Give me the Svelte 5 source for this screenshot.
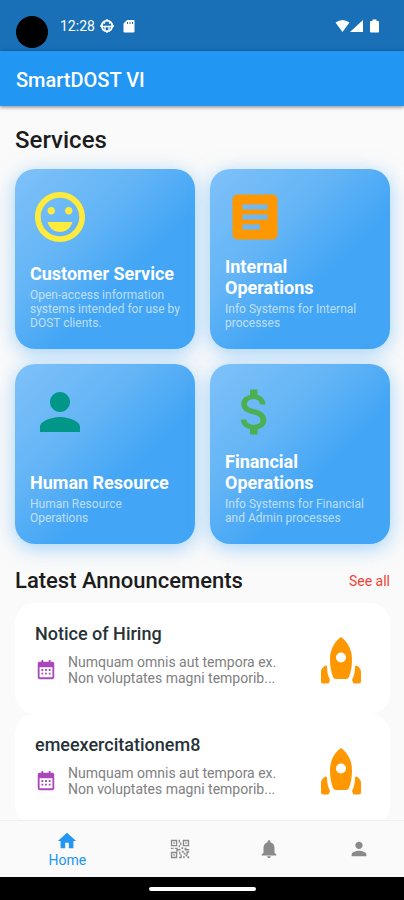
<script>
  let active = "Home";

  const services = [
    {
      icon: "smile",
      color: "#ffeb3b",
      title: "Customer Service",
      text: "Open-access information systems intended for use by DOST clients."
    },
    {
      icon: "article",
      color: "#ff9800",
      title: "Internal Operations",
      text: "Info Systems for Internal processes"
    },
    {
      icon: "person",
      color: "#009688",
      title: "Human Resource",
      text: "Human Resource Operations"
    },
    {
      icon: "dollar",
      color: "#4caf50",
      title: "Financial Operations",
      text: "Info Systems for Financial and Admin processes"
    }
  ];

  const announcements = [
    { title: "Notice of Hiring", lines: ["Numquam omnis aut tempora ex.", "Non voluptates magni temporib..."] },
    { title: "emeexercitationem8", lines: ["Numquam omnis aut tempora ex.", "Non voluptates magni temporib..."] }
  ];

  const tabs = [
    { name: "Home", icon: "home" },
    { name: "Scan", icon: "qr" },
    { name: "Notifications", icon: "bell" },
    { name: "Profile", icon: "person" }
  ];

  // 24x24 glyphs
  const paths = {
    smile:
      "M11.99 2C6.47 2 2 6.48 2 12s4.47 10 9.99 10C17.52 22 22 17.52 22 12S17.52 2 11.99 2zM12 19.700c-4.250 0-7.700-3.450-7.700-7.700s3.450-7.700 7.700-7.700 7.700 3.450 7.700 7.700-3.450 7.700-7.700 7.700zm3.500-8.700c.83 0 1.500-.67 1.500-1.500S16.330 8 15.500 8 14 8.670 14 9.500s.67 1.500 1.500 1.500zm-7 0c.83 0 1.500-.67 1.500-1.500S9.330 8 8.500 8 7 8.670 7 9.500 7.670 11 8.500 11zM7 14c.7 2.340 2.600 4 5 4s4.300-1.660 5-4z",
    article:
      "M19 3H5c-1.100 0-2 .9-2 2v14c0 1.100.9 2 2 2h14c1.100 0 2-.9 2-2V5c0-1.100-.9-2-2-2zm-5 14H7v-2h7v2zm3-4H7v-2h10v2zm0-4H7V7h10v2z",
    person:
      "M12 12c2.210 0 4-1.790 4-4s-1.790-4-4-4-4 1.790-4 4 1.790 4 4 4zm0 2c-2.670 0-8 1.340-8 4v2h16v-2c0-2.660-5.330-4-8-4z",
    dollar:
      "M11.800 10.900c-2.270-.59-3-1.200-3-2.150 0-1.090 1.010-1.850 2.700-1.850 1.780 0 2.440.85 2.500 2.100h2.210c-.07-1.720-1.120-3.300-3.210-3.810V3h-3v2.160c-1.940.42-3.500 1.680-3.500 3.610 0 2.310 1.910 3.460 4.700 4.130 2.500.6 3 1.480 3 2.410 0 .69-.49 1.790-2.700 1.790-2.060 0-2.870-.92-2.980-2.100h-2.200c.12 2.190 1.760 3.420 3.680 3.830V21h3v-2.150c1.950-.37 3.500-1.500 3.500-3.550 0-2.840-2.430-3.810-4.700-4.400z",
    home: "M10 20v-6h4v6h5v-8h3L12 3 2 12h3v8z",
    bell:
      "M12 22c1.100 0 2-.9 2-2h-4c0 1.100.89 2 2 2zm6-6v-5c0-3.070-1.640-5.640-4.500-6.320V4c0-.83-.67-1.500-1.500-1.500s-1.500.67-1.500 1.500v.68C7.630 5.360 6 7.920 6 11v5l-2 2v1h16v-1l-2-2z",
    qr:
      "M2 2h7v7H2zM3.500 3.500v4h4v-4zM4.700 4.700h1.600v1.600H4.700zM15 2h7v7h-7zM16.500 3.500v4h4v-4zM17.700 4.700h1.600v1.600h-1.600zM2 15h7v7H2zM3.500 16.500v4h4v-4zM4.700 17.700h1.600v1.600H4.700zM10.500 2H12v3h-1.500zM12 5h1.500v3H12zM10.500 8H12v2h-1.500zM2 10.500h3V12H2zM6.500 10.500h3V12h3v1.500h-3V15H8v-3H6.500zM13.500 10h2v2h-2zM17 10.500h2V12h3v1.500h-5zM11 15h1.500v3H11zM12.500 18H14v4h-3v-1.500h1.500zM14 14h2v2h-2zM16 16h2v2h-2zM18 18h2v2h-2zM20 20h2v2h-2zM19 14.500h3V16h-1.500v2H19zM15.500 19.500H17V22h-1.500z",
    calendar:
      "M7 1v2H5C3.900 3 3 3.900 3 5v15c0 1.100.9 2 2 2h14c1.100 0 2-.9 2-2V5c0-1.100-.9-2-2-2h-2V1h-2v2H9V1zM5 9h14v11H5zM7 11v2h2v-2zM11 11v2h2v-2zM15 11v2h2v-2zM7 15v2h2v-2zM11 15v2h2v-2zM15 15v2h2v-2z"
  };
</script>

{#snippet glyph(name)}
  <svg viewBox="0 0 24 24" aria-hidden="true">
    <path fill="currentColor" fill-rule={name === "qr" ? "evenodd" : "nonzero"} d={paths[name]} />
  </svg>
{/snippet}

<div class="app">
  <div class="status">
    <span class="camera"></span>
    <span class="time">12:28</span>
    <svg class="globe" viewBox="0 0 14 14" aria-hidden="true">
      <circle cx="7" cy="7" r="5.300" fill="none" stroke="#fff" stroke-width="1.800" />
      <path d="M2 7.500h10M5 4.500L3.500 3M9 4.500L10.500 3M5 7.500V11M9 7.500V11M7 0v2.500M7 11.500V14M0 7h2M12 7h2" fill="none" stroke="#fff" stroke-width="1.300" />
    </svg>
    <svg class="sd" viewBox="0 0 12 14" aria-hidden="true">
      <path fill="#fff" fill-rule="evenodd" d="M4 1h6.500Q11.500 1 11.500 2v10.500q0 1-1 1h-9q-1 0-1-1V4.500zM4 3v2h1V3zM6.500 3v2h1V3zM9 3v2h1V3z" />
    </svg>
    <span class="signals">
      <svg width="15" height="14" viewBox="0 0 15 14" aria-hidden="true">
        <path fill="#fff" d="M.5 3.500Q7.500-1.500 14.500 3.500L7.500 13z" />
      </svg>
      <svg width="13" height="14" viewBox="0 0 13 14" aria-hidden="true">
        <path fill="#fff" d="M13 1v12H0z" />
      </svg>
      <svg class="battery" width="9" height="14" viewBox="0 0 9 14" aria-hidden="true">
        <path fill="#fff" d="M2.500.5h4V2H8q1 0 1 1v9.500q0 1-1 1H1q-1 0-1-1V3q0-1 1-1h1.500z" />
      </svg>
    </span>
  </div>

  <header>
    <h1>SmartDOST VI</h1>
  </header>

  <main>
    <h2 class="services-head">Services</h2>
    <div class="services">
      {#each services as service}
        <a class="service" href="#{service.icon}">
          <span class="service-icon" style="color: {service.color}">{@render glyph(service.icon)}</span>
          <span class="service-title">{service.title}</span>
          <span class="service-text">{service.text}</span>
        </a>
      {/each}
    </div>

    <div class="section-head">
      <h2>Latest Announcements</h2>
      <a href="#all">See all</a>
    </div>

    {#each announcements as item}
      <article>
        <div class="info">
          <h3>{item.title}</h3>
          <div class="summary">
            <span class="calendar">{@render glyph("calendar")}</span>
            <p>
              {#each item.lines as line}
                <span>{line}</span>
              {/each}
            </p>
          </div>
        </div>
        <svg class="rocket" viewBox="0 0 42 48" aria-hidden="true">
          <path fill="#ff9800" fill-rule="evenodd" d="M21 0C28 5 32 13 32 22c0 7-1 13-3 18q-.8 2-3 2H16q-2.200 0-3-2C11 35 10 29 10 22 10 13 14 5 21 0zM21 15.500a5 5 0 1 0 0 10 5 5 0 1 0 0-10z" />
          <path fill="#ff9800" d="M5.500 28.500Q7 28 7 30C7 35 8 39 10 43L8.500 46.500H3Q1 46.500 1 44.500V35q0-4 4.500-6.500zM36.500 28.500Q35 28 35 30C35 35 34 39 32 43l1.500 3.500H39q2 0 2-2V35q0-4-4.500-6.500z" />
        </svg>
      </article>
    {/each}
  </main>

  <nav>
    {#each tabs as tab}
      <button class={active === tab.name ? "active" : ""} aria-label={tab.name} on:click={() => (active = tab.name)}>
        {@render glyph(tab.icon)}
        {#if active === tab.name}
          <span>{tab.name}</span>
        {/if}
      </button>
    {/each}
  </nav>
  <div class="gesture"><span></span></div>
</div>

<style>
  .app {
    display: flex;
    flex-direction: column;
    height: 100vh;
    overflow: hidden;
    background: #fafafa;
    color: #1c1c1c;
    font-family: Roboto, sans-serif;
  }

  svg {
    display: block;
  }

  h1,
  h2,
  h3,
  p {
    margin: 0;
  }

  .status {
    display: flex;
    flex: none;
    align-items: center;
    height: 51px;
    padding: 0 25px 0 16px;
    background: #1a70b7;
    color: #fff;
  }

  .camera {
    width: 32px;
    height: 32px;
    margin: 12px 12px 0 0;
    border-radius: 50%;
    background: #000;
  }

  .time {
    font-size: 14px;
    line-height: 20px;
  }

  .globe {
    width: 14px;
    height: 14px;
    margin-left: 5px;
  }

  .sd {
    width: 12px;
    height: 14px;
    margin-left: 9px;
  }

  .signals {
    display: flex;
    margin-left: auto;
  }

  .battery {
    margin-left: 7px;
  }

  header {
    position: relative;
    flex: none;
    padding: 17px 16px 14px;
    background: #2196f3;
    box-shadow: 0 1px 4px rgba(0, 0, 0, 0.5);
  }

  h1 {
    color: #fff;
    font-size: 20px;
    font-weight: 500;
    line-height: 24px;
  }

  main {
    flex: 1;
    min-height: 0;
    overflow-y: auto;
    padding: 20px 14px 0 15px;
    scrollbar-width: none;
  }

  h2 {
    font-size: 22px;
    font-weight: 500;
    line-height: 28px;
  }

  .services-head {
    font-size: 24px;
  }

  .services {
    display: grid;
    grid-template-columns: 1fr 1fr;
    gap: 15px;
    margin-top: 15px;
  }

  .service {
    display: flex;
    flex-direction: column;
    box-sizing: border-box;
    aspect-ratio: 1;
    padding: 18px 13px 19px 15px;
    border-radius: 20px;
    background: linear-gradient(135deg, #7fc1f9 0%, #64b5f6 35%, #42a5f5 62%, #42a5f5 100%);
    box-shadow: 0 4px 20px rgba(100, 181, 246, 0.6);
    color: #fff;
    text-decoration: none;
  }

  .service-icon {
    width: 60px;
    height: 60px;
    margin-bottom: auto;
  }

  .service-title {
    font-size: 18px;
    font-weight: 700;
    line-height: 21px;
  }

  .service-text {
    margin-top: 4px;
    color: rgba(255, 255, 255, 0.65);
    font-size: 12px;
    line-height: 14px;
  }

  .section-head {
    display: flex;
    align-items: center;
    justify-content: space-between;
    margin: 23px 0 8px;
  }

  .section-head a {
    color: #f44336;
    font-size: 14px;
    text-decoration: none;
  }

  article {
    display: flex;
    align-items: center;
    justify-content: space-between;
    padding: 20px 28px 28px 20px;
    border-radius: 20px;
    background: #fff;
  }

  h3 {
    color: #263238;
    font-size: 18px;
    font-weight: 500;
    line-height: 22px;
  }

  .summary {
    display: flex;
    align-items: center;
    margin-top: 9px;
  }

  .calendar {
    width: 22px;
    height: 22px;
    margin-right: 11px;
    color: #ab47bc;
  }

  p {
    color: #808080;
    font-size: 14px;
    line-height: 16px;
  }

  p span {
    display: block;
  }

  .rocket {
    width: 42px;
    height: 48px;
    margin-top: 12px;
  }

  nav {
    display: flex;
    flex: none;
    height: 56px;
    border-top: 1px solid #eee;
    background: #fafafa;
  }

  button {
    display: flex;
    flex: 1;
    flex-direction: column;
    align-items: center;
    justify-content: center;
    padding: 0;
    border: 0;
    background: none;
    color: #8a8a8a;
    font: 14px/17px Roboto, sans-serif;
    cursor: pointer;
  }

  button.active {
    flex: 1.5;
    color: #2196f3;
  }

  button svg {
    width: 22px;
    height: 22px;
  }

  .gesture {
    display: flex;
    flex: none;
    align-items: center;
    justify-content: center;
    height: 23px;
    background: #000;
  }

  .gesture span {
    width: 107px;
    height: 4px;
    border-radius: 2px;
    background: #fff;
  }
</style>
